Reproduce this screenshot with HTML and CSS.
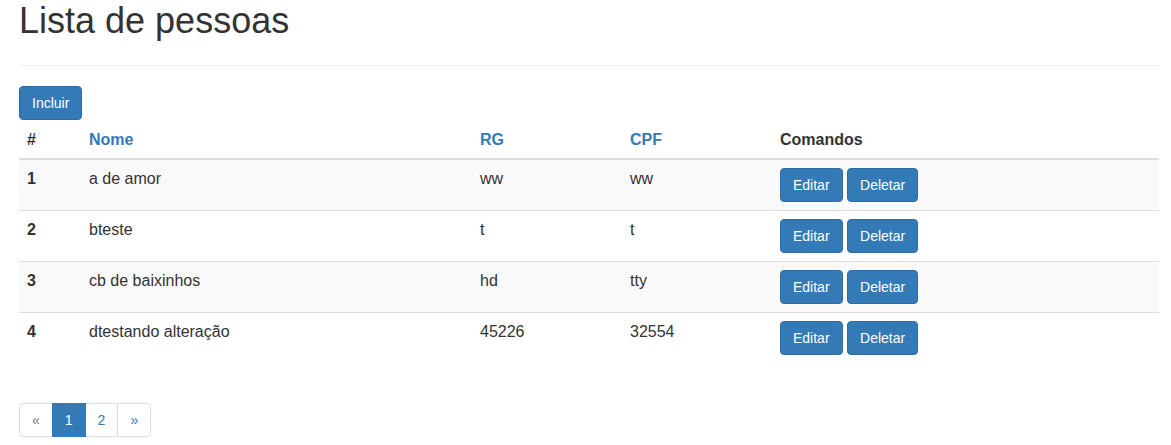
FILE: index.html
```html
<!DOCTYPE html>
<html lang="pt">
<head>
<meta charset="utf-8">
<title>Lista de pessoas</title>
<link rel="stylesheet" href="styles.css">
</head>
<body>
<div class="container">
  <div class="page-header">
    <h1>Lista de pessoas</h1>
  </div>
  <a class="btn btn-primary" href="#">Incluir</a>
  <table class="table">
    <thead>
      <tr>
        <th class="c-id">#</th>
        <th class="c-nome"><a href="#">Nome</a></th>
        <th class="c-rg"><a href="#">RG</a></th>
        <th class="c-cpf"><a href="#">CPF</a></th>
        <th>Comandos</th>
      </tr>
    </thead>
    <tbody>
      <tr>
        <th>1</th><td>a de amor</td><td>ww</td><td>ww</td>
        <td class="cmd"><a class="btn btn-primary" href="#">Editar</a> <a class="btn btn-primary" href="#">Deletar</a></td>
      </tr>
      <tr>
        <th>2</th><td>bteste</td><td>t</td><td>t</td>
        <td class="cmd"><a class="btn btn-primary" href="#">Editar</a> <a class="btn btn-primary" href="#">Deletar</a></td>
      </tr>
      <tr>
        <th>3</th><td>cb de baixinhos</td><td>hd</td><td>tty</td>
        <td class="cmd"><a class="btn btn-primary" href="#">Editar</a> <a class="btn btn-primary" href="#">Deletar</a></td>
      </tr>
      <tr>
        <th>4</th><td>dtestando alteração</td><td>45226</td><td>32554</td>
        <td class="cmd"><a class="btn btn-primary" href="#">Editar</a> <a class="btn btn-primary" href="#">Deletar</a></td>
      </tr>
    </tbody>
  </table>
  <ul class="pagination">
    <li class="disabled"><span>«</span></li>
    <li class="active"><span>1</span></li>
    <li><a href="#">2</a></li>
    <li><a href="#">»</a></li>
  </ul>
</div>
</body>
</html>
```

FILE: styles.css
```css
* { box-sizing: border-box; }
html, body { margin: 0; padding: 0; background: #fff; }
body {
  font-family: "Liberation Sans", Arial, Helvetica, sans-serif;
  font-size: 14px;
  line-height: 20px;
  color: #333;
}
.container {
  padding: 0 12px 0 19px;
}
.page-header {
  border-bottom: 1px solid #eee;
  padding-bottom: 0;
  margin: 0 0 20px;
  height: 66px;
}
.page-header h1 {
  margin: 0;
  padding-top: 1px;
  font-size: 36px;
  font-weight: 500;
  line-height: 40px;
  color: #333;
}
a { color: #337ab7; text-decoration: none; }
.btn {
  display: inline-block;
  padding: 6px 12px;
  font-size: 14px;
  line-height: 20px;
  border: 1px solid transparent;
  border-radius: 4px;
  vertical-align: middle;
  white-space: nowrap;
}
.btn-primary {
  color: #fff;
  background-color: #337ab7;
  border-color: #2e6da4;
}
.table {
  width: 100%;
  border-collapse: collapse;
  border-spacing: 0;
  margin: 2px 0 40px;
  font-size: 16px;
}
.table th, .table td {
  padding: 8px;
  text-align: left;
  vertical-align: top;
  line-height: 20px;
  border-top: 1px solid #ddd;
}
.table tbody th, .table tbody td { padding-top: 9px; }
.table tbody td.cmd { padding-top: 8px; }
.table thead th {
  border-top: 0;
  border-bottom: 2px solid #ddd;
  vertical-align: bottom;
  font-weight: bold;
}
.table thead th a { color: #337ab7; }
.table tbody th { font-weight: bold; }
.table tbody tr:nth-child(odd) { background-color: #f9f9f9; }
.c-id { width: 62px; }
.c-nome { width: 391px; }
.c-rg { width: 150px; }
.c-cpf { width: 150px; }
.pagination {
  display: flex;
  list-style: none;
  padding: 0;
  margin: 40px 0 20px;
}
.pagination li > a, .pagination li > span {
  display: block;
  padding: 6px 12px;
  font-size: 14px;
  line-height: 20px;
  border: 1px solid #ddd;
  margin-left: -1px;
  color: #337ab7;
  background: #fff;
}
.pagination li:first-child > span {
  margin-left: 0;
  border-radius: 4px 0 0 4px;
}
.pagination li:last-child > a { border-radius: 0 4px 4px 0; }
.pagination li.disabled > span { color: #777; }
.pagination li.active > span {
  background: #337ab7;
  border-color: #337ab7;
  color: #fff;
  position: relative;
  z-index: 1;
}
```
